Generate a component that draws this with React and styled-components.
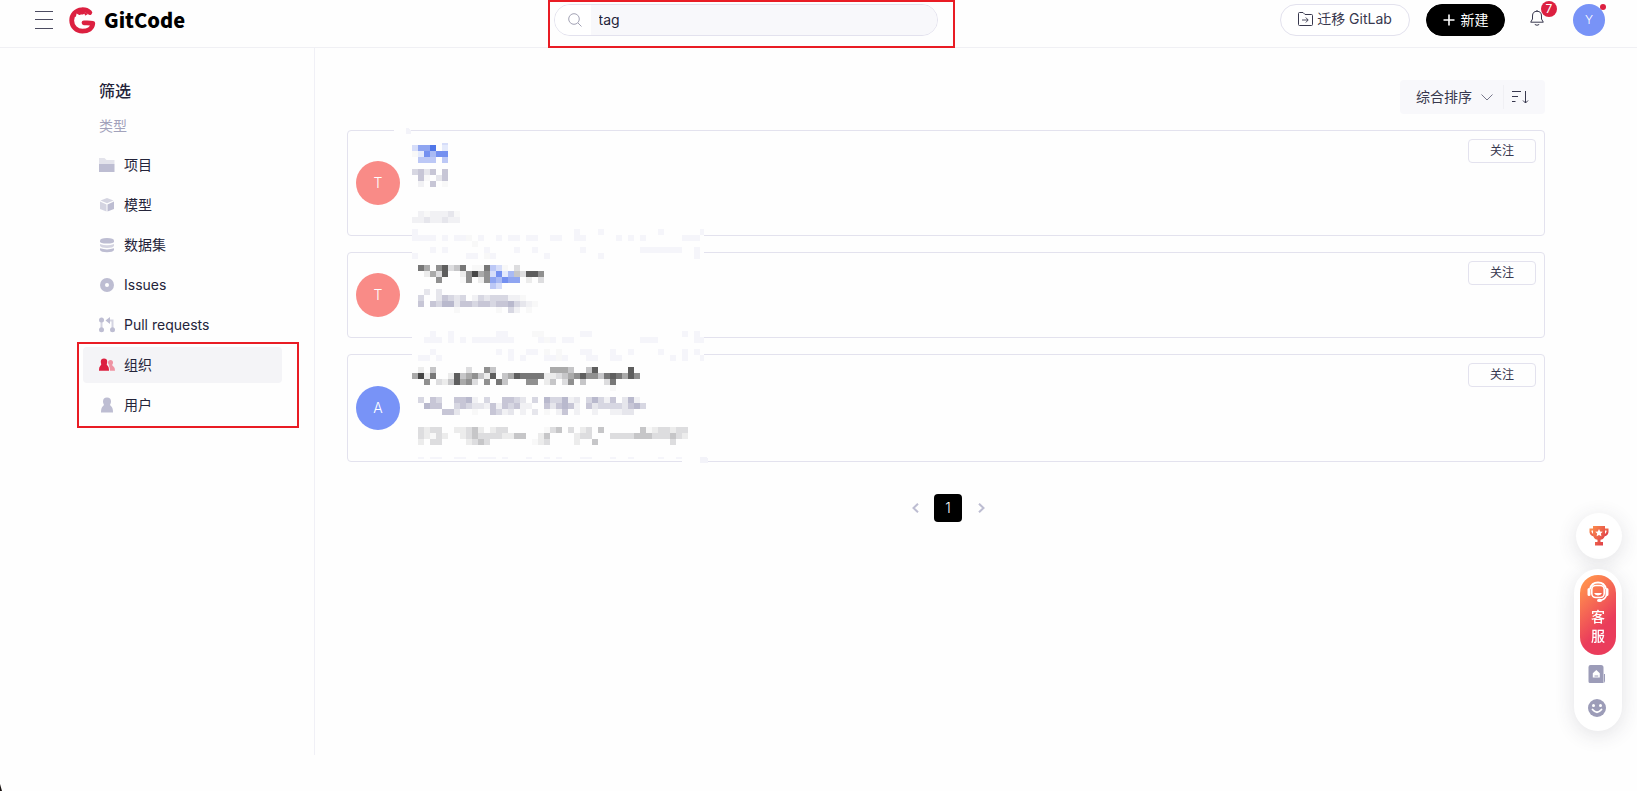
import React, { useState } from 'react';
import styled, { createGlobalStyle, css } from 'styled-components';

const GlobalStyle = createGlobalStyle`
  * {
    box-sizing: border-box;
  }

  body {
    margin: 0;
    background: #fefefe;
    color: #24243a;
    font-family: Inter, 'Noto Sans CJK SC', sans-serif;
    font-size: 14px;
    line-height: 20px;
  }

  button,
  input {
    font: inherit;
    color: inherit;
  }

  button {
    padding: 0;
    border: none;
    background: none;
    cursor: pointer;
  }

  svg {
    display: block;
    flex: none;
  }
`;

const Header = styled.header`
  display: flex;
  align-items: center;
  padding: 4px 32px 11px 35px;
  border-bottom: 1px solid #f0f0f4;
`;

const Brand = styled.a`
  display: flex;
  align-items: center;
  gap: 8px;
  margin-left: 16px;
  color: #000;
  font-family: 'Noto Sans CJK SC', sans-serif;
  font-size: 20px;
  font-weight: 900;
  line-height: 32px;
  text-decoration: none;
`;

const SearchArea = styled.div`
  flex: 1;
  display: flex;
  justify-content: center;
  padding-left: 26px;
`;

const outline = css`
  content: '';
  position: absolute;
  border: 2px solid #e91c24;
  pointer-events: none;
`;

const SearchMark = styled.div`
  position: relative;
  flex: 0 1 384px;

  &::after {
    ${outline}
    inset: -4px -17px -12px -6px;
  }
`;

const SearchBox = styled.label`
  display: flex;
  height: 32px;
  border: 1px solid #e3e2ee;
  border-radius: 16px;
  overflow: hidden;
`;

const SearchIcon = styled.span`
  display: flex;
  align-items: center;
  justify-content: center;
  width: 36px;
  padding-left: 4px;
  background: #fff;
`;

const SearchInput = styled.input`
  flex: 1;
  min-width: 0;
  padding: 0 8px;
  border: none;
  outline: none;
  background: #f8f8fb;
`;

const Actions = styled.div`
  display: flex;
  align-items: center;
`;

const PillButton = styled.button`
  display: flex;
  align-items: center;
  justify-content: center;
  gap: ${props => (props.$dark ? 6 : 4)}px;
  width: ${props => (props.$dark ? 79 : 130)}px;
  height: 32px;
  padding-bottom: ${props => (props.$dark ? 0 : 2)}px;
  border: 1px solid ${props => (props.$dark ? '#000' : '#e3e2ee')};
  border-radius: 16px;
  background: ${props => (props.$dark ? '#000' : '#fff')};
  color: ${props => (props.$dark ? '#fff' : '#38384e')};

  & + & {
    margin-left: 16px;
  }
`;

const BellButton = styled.button`
  position: relative;
  margin: 0 29px 4px 25px;
`;

const Badge = styled.span`
  position: absolute;
  top: -9px;
  left: 11px;
  width: 16px;
  height: 16px;
  border-radius: 8px;
  background: #dc2040;
  color: #fff;
  font-size: 12px;
  line-height: 16px;
  text-align: center;
`;

const Avatar = styled.span`
  position: relative;
  display: flex;
  flex: none;
  align-items: center;
  justify-content: center;
  width: ${props => props.$size}px;
  height: ${props => props.$size}px;
  border-radius: 50%;
  background: ${props => props.$color};
  color: #fff;
  font-size: ${props => (props.$size > 40 ? 14 : 12)}px;
  font-weight: 300;
`;

const Dot = styled.span`
  position: absolute;
  top: 0;
  right: -1px;
  width: 6px;
  height: 6px;
  border-radius: 50%;
  background: #dc2040;
`;

const Page = styled.div`
  display: flex;
  align-items: flex-start;
`;

const Sidebar = styled.aside`
  flex: 0 0 315px;
  min-height: calc(100vh - 84px);
  padding: 31px 32px 0 83px;
  border-right: 1px solid #f0f0f6;
`;

const FilterTitle = styled.h2`
  margin: 0;
  padding-left: 16px;
  font-size: 16px;
  font-weight: 500;
  line-height: 24px;
`;

const FilterLabel = styled.p`
  margin: 13px 0 11px;
  padding-left: 16px;
  color: #a2a2bb;
  line-height: 20px;
`;

const FilterList = styled.nav`
  display: flex;
  flex-direction: column;
  gap: 4px;
`;

const MarkedGroup = styled.div`
  position: relative;
  display: flex;
  flex-direction: column;
  gap: 4px;

  &::after {
    ${outline}
    inset: -5px -17px -5px -6px;
  }
`;

const FilterItem = styled.a`
  display: flex;
  align-items: center;
  gap: 9px;
  height: 36px;
  padding-left: 16px;
  border-radius: 4px;
  background: ${props => (props.$active ? '#f4f4f7' : 'transparent')};
  color: #24243a;
  text-decoration: none;
`;

const Main = styled.main`
  flex: 1;
  min-width: 0;
  padding: 32px 92px 0 32px;
`;

const Toolbar = styled.div`
  display: flex;
  align-items: center;
  width: max-content;
  height: 34px;
  margin: 0 0 16px auto;
  border-radius: 4px;
  background: #f8f8fb;
  color: #38384e;
`;

const SortButton = styled.button`
  display: flex;
  align-items: center;
  gap: 9px;
  height: 24px;
  padding: 0 10px 0 16px;
  border-right: 1px solid #f0f0f4;
`;

const OrderButton = styled.button`
  padding: 0 16px 0 8px;
`;

const Results = styled.div`
  position: relative;
  display: flex;
  flex-direction: column;
  gap: 16px;
`;

const Card = styled.article`
  display: flex;
  align-items: center;
  justify-content: space-between;
  min-height: ${props => props.$height}px;
  padding: 8px;
  border: 1px solid #e3e2ee;
  border-radius: 4px;
  background: #fefefe;
`;

const FollowButton = styled.button`
  align-self: flex-start;
  width: 68px;
  height: 24px;
  border: 1px solid #e3e2ee;
  border-radius: 4px;
  color: #38384e;
  font-size: 12px;
  line-height: 22px;
`;

const MosaicSvg = styled.svg`
  position: absolute;
  top: -2px;
  left: 47px;
  pointer-events: none;
`;

const Pagination = styled.nav`
  display: flex;
  align-items: center;
  justify-content: center;
  gap: 12px;
  margin-top: 32px;
  padding-left: 4px;
`;

const PageButton = styled.button`
  display: flex;
  align-items: center;
  justify-content: center;
  width: ${props => (props.$current ? 28 : 14)}px;
  height: 28px;
  border-radius: 4px;
  background: ${props => (props.$current ? '#000' : 'transparent')};
  color: #fff;
  font-weight: 300;
`;

const FloatBar = styled.div`
  position: fixed;
  right: 15px;
  bottom: 60px;
  display: flex;
  flex-direction: column;
  align-items: flex-end;
  gap: 10px;
`;

const floatSurface = css`
  background: #fff;
  box-shadow: 0 4px 20px rgba(60, 60, 80, 0.14);
`;

const TrophyButton = styled.button`
  ${floatSurface}
  display: flex;
  align-items: center;
  justify-content: center;
  width: 46px;
  height: 46px;
  border-radius: 50%;
`;

const FloatPill = styled.div`
  ${floatSurface}
  display: flex;
  flex-direction: column;
  align-items: center;
  width: 48px;
  padding: 6px 6px 14px;
  border-radius: 24px;
`;

const ServiceButton = styled.button`
  display: flex;
  flex-direction: column;
  align-items: center;
  width: 36px;
  height: 80px;
  padding-top: 6px;
  border-radius: 18px;
  background: linear-gradient(135deg, #ff8d4e 12%, #ea3c5b 65%);
  color: #fff;
  font-weight: 500;
  line-height: 19px;

  span {
    width: 14px;
    margin-top: 4px;
  }
`;

const FloatIcon = styled.button`
  margin-top: ${props => props.$gap}px;
  padding-right: 2px;
`;

const Corner = styled.svg`
  position: fixed;
  left: 0;
  bottom: 0;
`;

const LogoIcon = () => (
  <svg width="27" height="27" viewBox="0 0 27 27" fill="none">
    <path
      d="M20.800 5.500C18.8 3.600 15.8 2.6 12.6 2.8C6.8 3.1 2.6 7.7 2.7 13.5C2.8 19.6 7.5 24.2 13.4 24.2C19 24.2 23.4 21.400 23.8 16.4C20.6 16 17.5 16 15 15.800"
      stroke="#dc2040"
      strokeWidth="4.800"
      strokeLinecap="round"
      strokeLinejoin="round"
    />
    <path d="M5 9L8 5L15.500 5L19 7L16.500 8.600L12 7.600L7 10Z" fill="#dc2040" />
    <path d="M6.700 10.500L7.600 6.600L10.200 7.900L13.200 7.700L15.600 6.700L16 9L11 10Z" fill="#fefefe" />
  </svg>
);

const MenuIcon = () => (
  <svg width="18" height="18" viewBox="0 0 18 18">
    <path d="M0 .5H18M0 8.500H18M0 17.500H18" stroke="#4b4b60" />
  </svg>
);

const SearchGlyph = () => (
  <svg width="14" height="14" viewBox="0 0 14 14" fill="none" stroke="#a2a2b4">
    <circle cx="6" cy="6" r="5.300" />
    <path d="M10 10L13.500 13.500" />
  </svg>
);

const MigrateIcon = () => (
  <svg width="15" height="15" viewBox="0 0 15 15" fill="none" stroke="#38384e">
    <path d="M.5 1.500Q.5 .5 1.500 .5H5L7 2.500H13.500Q14.500 2.500 14.500 3.500V12.500Q14.500 13.500 13.500 13.500H1.500Q.5 13.500 .5 12.500Z" />
    <path d="M4 8H10M7.800 5.500L10.200 8L7.800 10.500" strokeWidth=".9" />
  </svg>
);

const BellIcon = () => (
  <svg width="14" height="16" viewBox="0 0 14 16" fill="none" stroke="#38384e">
    <path d="M7 0V1.200M2.500 6Q2.500 1.300 7 1.300Q11.500 1.300 11.500 6V9L13.300 12.200H.7L2.500 9Z" strokeLinejoin="round" />
    <path d="M4.800 14.500Q7 16 9.200 14.500" />
  </svg>
);

// Sidebar icons share a 16px box
const filterIcons = {
  project: (
    <>
      <path d="M0 1H5.500L7.500 3H15.500V7H0Z" fill="#e3e3eb" />
      <path d="M0 7H15.500V15H0Z" fill="#bdbdd2" />
    </>
  ),
  model: (
    <>
      <path d="M8 1L14.500 3.600L8 6.300L1.500 3.600Z" fill="#d4d4e1" />
      <path d="M1 4.600L7.500 7.400V14.600L1 12Z" fill="#d4d4e1" />
      <path d="M15 4.600L8.500 7.400V14.600L15 12Z" fill="#bdbdd2" />
    </>
  ),
  dataset: (
    <>
      <path d="M1 3.500Q1 1 8 1Q15 1 15 3.500V4.500Q15 6.500 8 6.500Q1 6.500 1 4.500Z" fill="#bdbdd2" />
      <path d="M1 7Q8 9.600 15 7V8.800Q14 11 8 11Q2 11 1 8.800Z" fill="#d4d4e1" />
      <path d="M1 11.300Q8 13.600 15 11.300V13Q14 15.200 8 15.200Q2 15.200 1 13Z" fill="#bdbdd2" />
    </>
  ),
  issues: (
    <>
      <circle cx="8" cy="8" r="7" fill="#bdbdd2" />
      <circle cx="8" cy="8" r="2" fill="#fefefe" />
    </>
  ),
  pulls: (
    <>
      <path d="M2.500 3V13M8 3.500H13.500V13" fill="none" stroke="#d4d4e1" strokeWidth="2" />
      <circle cx="2.500" cy="3" r="2.500" fill="#bdbdd2" />
      <circle cx="2.500" cy="12.800" r="2.500" fill="#bdbdd2" />
      <circle cx="13.500" cy="12.800" r="2.500" fill="#bdbdd2" />
      <path d="M6.500 3.500L11 0V7Z" fill="#bdbdd2" />
    </>
  ),
  groups: (
    <>
      <circle cx="11.500" cy="5.500" r="2.500" fill="#ef93a3" />
      <path d="M10.500 7H13Q13 8.500 14.500 9.500Q16 10.500 16 13.800H11Q11 10 10 9Z" fill="#ef93a3" />
      <circle cx="5" cy="4.800" r="3.200" fill="#dc2040" />
      <path d="M2.500 6H7.500Q7.500 8 8.800 9Q10 10 10 13V13.800H0V13Q0 10 1.200 9Q2.500 8 2.500 6Z" fill="#dc2040" />
    </>
  ),
  users: (
    <>
      <circle cx="8" cy="4.600" r="4" fill="#bdbdd2" />
      <path d="M5 7H11Q11 8.500 12.400 9.600Q14 11 14 15.500H2Q2 11 3.600 9.600Q5 8.500 5 7Z" fill="#bdbdd2" />
    </>
  ),
};

const FilterIcon = ({ name }) => (
  <svg width="16" height="16" viewBox="0 0 16 16">
    {filterIcons[name]}
  </svg>
);

const TrophyIcon = () => (
  <svg width="20" height="20" viewBox="0 0 20 20">
    <defs>
      <linearGradient id="trophy" x1="0" y1="0" x2="1" y2="1">
        <stop offset="0" stopColor="#fb8b4c" />
        <stop offset="1" stopColor="#dd3848" />
      </linearGradient>
    </defs>
    <path d="M4 3.500H1.500V6Q2 9 5.500 9.500M16 3.500H18.500V6Q18 9 14.500 9.500" fill="none" stroke="url(#trophy)" strokeWidth="2" />
    <path d="M4 0H16V8Q16 13 11.500 13.800V16H14V19.500H6V16H8.500V13.800Q4 13 4 8Z" fill="url(#trophy)" />
    <path d="M10 3L11.200 5.400L13.800 5.800L11.900 7.600L12.400 10.200L10 9L7.600 10.200L8.100 7.600L6.200 5.800L8.800 5.400Z" fill="#fff" />
  </svg>
);

const HeadsetIcon = () => (
  <svg width="22" height="22" viewBox="0 0 22 22" fill="none" stroke="#fff">
    <path d="M3 8Q4.500 1.500 11 1.500Q17.500 1.500 19 8" strokeWidth="1.800" />
    <path d="M2 8.500V13.500M20 8.500V13.500" strokeWidth="3" strokeLinecap="round" />
    <rect x="4.800" y="4.500" width="12.400" height="12" rx="4" strokeWidth="1.600" />
    <path d="M7 12H15Q14 14.400 11 14.400Q8 14.400 7 12Z" fill="#fff" stroke="none" />
    <path d="M19.500 14Q18.500 18.500 13 19.300" strokeWidth="1.500" />
    <ellipse cx="12.500" cy="19.400" rx="2.500" ry="1.600" fill="#fff" stroke="none" />
  </svg>
);

const DocIcon = () => (
  <svg width="18" height="18" viewBox="0 0 18 18">
    <path d="M2.500 0H13Q15.500 0 15.500 2.500V9H17V16Q17 18 15 18H2Q.5 18 .5 16.500V2Q.5 0 2.500 0Z" fill="#9c9cb8" />
    <path d="M15.500 9V18" stroke="#c9c9d8" />
    <path d="M8.300 5L11.800 8.200V12.500H4.800V8.200Z" fill="#fff" />
    <path d="M6.500 11H10.200" stroke="#9c9cb8" />
  </svg>
);

const SmileIcon = () => (
  <svg width="18" height="18" viewBox="0 0 18 18">
    <circle cx="9" cy="9" r="9" fill="#9c9cb8" />
    <circle cx="5.500" cy="6.500" r="1.500" fill="#fff" />
    <circle cx="12.500" cy="6.500" r="1.500" fill="#fff" />
    <path d="M4.500 10.500Q9 16 13.500 10.500" fill="none" stroke="#fff" strokeWidth="1.800" strokeLinecap="round" />
  </svg>
);

const Chevron = ({ d, width, height, color, weight }) => (
  <svg width={width} height={height} viewBox={`0 0 ${width} ${height}`} fill="none">
    <path d={d} stroke={color} strokeWidth={weight} />
  </svg>
);

const OrderIcon = () => (
  <svg width="17" height="14" viewBox="0 0 17 14" fill="none" stroke="#38384e">
    <path d="M0 1.500H9M0 6.500H6M0 11.500H3.500" />
    <path d="M13.500 1V13M11 10.500L13.500 13L16 10.500" />
  </svg>
);

const CELL = 6;

const shades = {
  a: '#464646', b: '#5e5e5e', c: '#777777', d: '#909090', e: '#aaaaaa',
  f: '#c6c6c8', g: '#dddddf', h: '#ececec', i: '#f8f8f8',
  A: '#b9b9cd', B: '#c7c6d6', C: '#d7d7e2', D: '#e6e6ec', E: '#f1f1f4', F: '#f5f5fa',
  1: '#5076e8', 2: '#7490f0', 3: '#8fa5f1', 4: '#a9baf4', 5: '#bcc8f6', 6: '#d6ddf9', 7: '#e4eafc',
};

// Pixelated text, keyed by row; one letter is one cell
const mosaic = {
  0: '6331.7',
  1: 'i72422',
  2: '.555.5',
  4: 'CBDB.B',
  5: '.Bi.DB',
  6: '.E.B.i',
  11: '.EiEEEDi',
  12: 'EEDEEDEE',
  14: 'F..........................F...F.........F......F',
  15: 'FFFF.F.FFi.F..F.FF.FF..FF..FF.....F.F.F......FFF',
  16: '..........i',
  17: '...F.F......F....F..F.......F.........FFFFFFF..F',
  18: 'F........FF.iF........F........F...............F',
  20: '.ce.dbgfc.iic56i.g',
  21: '..hegb..hdaed6274fgbbd',
  22: '....d...id.hd34233.h.g',
  23: '.............56',
  24: '..D.D',
  25: '.C..DBCDC.ECDCCCEEi',
  26: '.B.BCAADBBCBBCBBACDEi',
  27: '.......i......i.CE.i',
  31: '...F..F.......FF....ii......FF...............F.F',
  32: '..FFF.F.F.FFFFFFF....FiF.FF...........FFF......FF',
  34: '...F..........F.F..FF.i.i...FF...F..F....F...F.F',
  35: '.FF.F...........F.F...FFiF...FF..FF........F.F..F',
  37: '.h.f.....g..df.........eeef..fb.....b',
  38: 'eahc..hbfedfhb.febcccchhgfedbddfcbcebd',
  39: '..d.ghfbedg.d.cf...dd.hf.gd.f...gc',
  40: '.................................i',
  42: '.C.BC..BBAE.C..BBCD.C.ACCAED.CACEB.DAE',
  43: '..ABB..CBCDDEBEBCBEE..BDBABE.BDCCCCDBAC',
  44: '.....BBD..i..BCED.E.D.i.EB.E..E..EEDD',
  47: '.ghgg..hhgfh.hgg......igf.g.hg.f......fihgghgg',
  48: '.ghigh..hgfgggghhff..hf....hgg...ggggfffgggfgh',
  49: '.h.gg....hgfg.......ihg....h..f............g',
};

const mosaicCells = Object.entries(mosaic).flatMap(([row, line]) =>
  [...line].map((shade, col) => ({ row: Number(row), col, fill: shades[shade] }))
);

const lastRow = [1, 3, 4, 7, 8, 11, 12, 13, 15, 19, 22, 24, 28, 29, 33, 36, 41, 44];

const Mosaic = () => (
  <MosaicSvg width="314" height="335" viewBox="0 0 314 335" shapeRendering="crispEdges" aria-hidden="true">
    <rect width="16" height="6" fill="#fefefe" />
    <rect x="18" y="14" width="292" height="317" fill="#fefefe" />
    <rect x="288" y="331" width="18" height="3" fill="#fefefe" />
    <path d="M12 0H14L17 3V6H12Z" fill="#f3f3f9" />
    <rect x="48" y="15" width="6" height="2" fill="#d6ddf9" />
    <path d="M306 329H312L314 331V335H306Z" fill="#f3f3f9" />
    {mosaicCells.filter(cell => cell.fill).map(cell => (
      <rect
        key={`${cell.row}-${cell.col}`}
        x={18 + cell.col * CELL}
        y={17 + cell.row * CELL}
        width={cell.col === 48 ? 4 : CELL}
        height={CELL}
        fill={cell.fill}
      />
    ))}
    {lastRow.map(col => (
      <rect key={col} x={18 + col * CELL} y="329" width={CELL} height="2" fill="#f5f5fa" />
    ))}
  </MosaicSvg>
);

const filters = [
  { icon: 'project', label: '项目' },
  { icon: 'model', label: '模型' },
  { icon: 'dataset', label: '数据集' },
  { icon: 'issues', label: 'Issues' },
  { icon: 'pulls', label: 'Pull requests' },
];

const memberFilters = [
  { icon: 'groups', label: '组织' },
  { icon: 'users', label: '用户' },
];

const organizations = [
  { id: 1, letter: 'T', color: '#f98b87', height: 106 },
  { id: 2, letter: 'T', color: '#f98b87', height: 86 },
  { id: 3, letter: 'A', color: '#7893f7', height: 108 },
];

const App = () => {
  const [query, setQuery] = useState('tag');
  const [active, setActive] = useState('groups');

  const renderFilter = ({ icon, label }) => (
    <FilterItem key={icon} href={`#${icon}`} $active={active === icon} onClick={() => setActive(icon)}>
      <FilterIcon name={icon} />
      {label}
    </FilterItem>
  );

  return (
    <>
      <GlobalStyle />
      <Header>
        <button type="button" aria-label="菜单">
          <MenuIcon />
        </button>
        <Brand href="#home">
          <LogoIcon />
          GitCode
        </Brand>
        <SearchArea>
          <SearchMark>
            <SearchBox>
              <SearchIcon>
                <SearchGlyph />
              </SearchIcon>
              <SearchInput aria-label="搜索" value={query} onChange={(e) => setQuery(e.target.value)} />
            </SearchBox>
          </SearchMark>
        </SearchArea>
        <Actions>
          <PillButton type="button">
            <MigrateIcon />
            迁移 GitLab
          </PillButton>
          <PillButton type="button" $dark>
            <svg width="12" height="12" viewBox="0 0 12 12">
              <path d="M6 .5V11.500M.5 6H11.500" stroke="#fff" strokeWidth="1.600" />
            </svg>
            新建
          </PillButton>
          <BellButton type="button" aria-label="通知">
            <BellIcon />
            <Badge>7</Badge>
          </BellButton>
          <Avatar $size={32} $color="#7893f7">
            Y
            <Dot />
          </Avatar>
        </Actions>
      </Header>
      <Page>
        <Sidebar>
          <FilterTitle>筛选</FilterTitle>
          <FilterLabel>类型</FilterLabel>
          <FilterList>
            {filters.map(renderFilter)}
            <MarkedGroup>{memberFilters.map(renderFilter)}</MarkedGroup>
          </FilterList>
        </Sidebar>
        <Main>
          <Toolbar>
            <SortButton type="button">
              综合排序
              <Chevron d="M.5 .5L6 6L11.500 .5" width={12} height={7} color="#77778a" weight={1} />
            </SortButton>
            <OrderButton type="button" aria-label="排序方向">
              <OrderIcon />
            </OrderButton>
          </Toolbar>
          <Results>
            {organizations.map(org => (
              <Card key={org.id} $height={org.height}>
                <Avatar $size={44} $color={org.color}>{org.letter}</Avatar>
                <FollowButton type="button">关注</FollowButton>
              </Card>
            ))}
            <Mosaic />
          </Results>
          <Pagination>
            <PageButton type="button" aria-label="上一页">
              <Chevron d="M6 .7L1.500 5L6 9.300" width={7} height={10} color="#bdbdd2" weight={2} />
            </PageButton>
            <PageButton type="button" $current>1</PageButton>
            <PageButton type="button" aria-label="下一页">
              <Chevron d="M1 .7L5.500 5L1 9.300" width={7} height={10} color="#bdbdd2" weight={2} />
            </PageButton>
          </Pagination>
        </Main>
      </Page>
      <FloatBar>
        <TrophyButton type="button" aria-label="活动">
          <TrophyIcon />
        </TrophyButton>
        <FloatPill>
          <ServiceButton type="button">
            <HeadsetIcon />
            <span>客服</span>
          </ServiceButton>
          <FloatIcon type="button" aria-label="文档" $gap={10}>
            <DocIcon />
          </FloatIcon>
          <FloatIcon type="button" aria-label="反馈" $gap={16}>
            <SmileIcon />
          </FloatIcon>
        </FloatPill>
      </FloatBar>
      <Corner width="2" height="7" viewBox="0 0 2 7">
        <path d="M0 0L2 7H0Z" fill="#1a1210" />
      </Corner>
    </>
  );
};

export default App;
